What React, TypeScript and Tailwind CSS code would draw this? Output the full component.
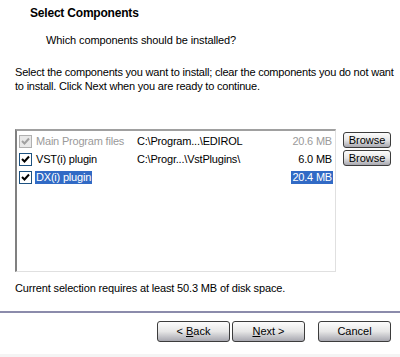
import React from "react";

const font = { fontFamily: '"Liberation Sans", Arial, sans-serif' };

function Check({ disabled }: { disabled?: boolean }) {
  const c = disabled ? "#a0a0a0" : "#000";
  return (
    <span
      className={`inline-flex w-[13px] h-[13px] border ${disabled ? "border-[#b0b0b0] bg-[#e8e8e8]" : "border-[#1c5180] bg-white"} items-center justify-center shrink-0`}
    >
      <svg width="9" height="9" viewBox="0 0 9 9">
        <path d="M1 4 L3.5 6.5 L8 1.5" stroke={c} strokeWidth="2" fill="none" />
      </svg>
    </span>
  );
}

function XpButton({ children, className = "" }: { children: React.ReactNode; className?: string }) {
  return (
    <div
      className={`flex items-center justify-center border border-[#3c3c3c] rounded-[3px] bg-gradient-to-b from-[#fcfcfc] via-[#e6e6e6] to-[#a8a8b0] text-[11px] text-black ${className}`}
    >
      {children}
    </div>
  );
}

export default function App() {
  return (
    <div className="w-[400px] h-[357px] bg-white text-black flex flex-col overflow-hidden text-[11px]" style={font}>
      <div className="pl-[30px] pt-[6px] font-bold text-[12px] leading-[14px] tracking-[-0.2px]">Select Components</div>
      <div className="pl-[46px] pt-[14px] leading-[13px] tracking-[-0.1px]">Which components should be installed?</div>
      <div className="pl-[15px] pt-[18px] leading-[14px] tracking-[-0.2px]">
        Select the components you want to install; clear the components you do not want
        <br />
        to install. Click Next when you are ready to continue.
      </div>
      <div className="flex pl-[15px] pt-[36px]">
        <div className="w-[321px] h-[143px] border-l-2 border-t-2 border-l-[#808080] border-t-[#a0a0a0] border-r border-b border-r-[#e0e0e0] border-b-[#e0e0e0] pt-[1px] pl-[2px] pr-[2px] tracking-[-0.2px]">
          <div className="flex items-center h-[18px] text-[#9a9a9a]">
            <Check disabled />
            <span className="ml-[4px] w-[101px]">Main Program files</span>
            <span className="text-black w-[120px]">C:\Program...\EDIROL</span>
            <span className="ml-auto pr-[1px]">20.6 MB</span>
          </div>
          <div className="flex items-center h-[18px]">
            <Check />
            <span className="ml-[4px] w-[101px]">VST(i) plugin</span>
            <span className="w-[120px]">C:\Progr...\VstPlugins\</span>
            <span className="ml-auto pr-[1px]">6.0 MB</span>
          </div>
          <div className="flex items-center h-[18px]">
            <Check />
            <span className="ml-[3px] px-[1px] bg-[#316ac5] text-white leading-[13px]">DX(i) plugin</span>
            <span className="ml-auto bg-[#316ac5] text-white px-[1px] leading-[13px]">20.4 MB</span>
          </div>
        </div>
        <div className="flex flex-col gap-[2px] ml-[7px] pt-[3px]">
          <XpButton className="w-[48px] h-[16px]">Browse</XpButton>
          <XpButton className="w-[48px] h-[16px]">Browse</XpButton>
        </div>
      </div>
      <div className="pl-[15px] pt-[10px] leading-[13px] tracking-[-0.15px]">Current selection requires at least 50.3 MB of disk space.</div>
      <div className="mt-[16px] h-[2px] bg-[#8b8bab] w-full" />
      <div className="flex items-start pl-[157px] pt-[8px]">
        <XpButton className="w-[73px] h-[21px]">
          &lt; <u className="ml-[3px]">B</u>ack
        </XpButton>
        <XpButton className="w-[73px] h-[21px] ml-[2px]">
          <u>N</u>ext &gt;
        </XpButton>
        <XpButton className="w-[73px] h-[21px] ml-[13px]">Cancel</XpButton>
      </div>
      <div className="mt-auto h-[3px] bg-[#f4f4f4]" />
    </div>
  );
}
